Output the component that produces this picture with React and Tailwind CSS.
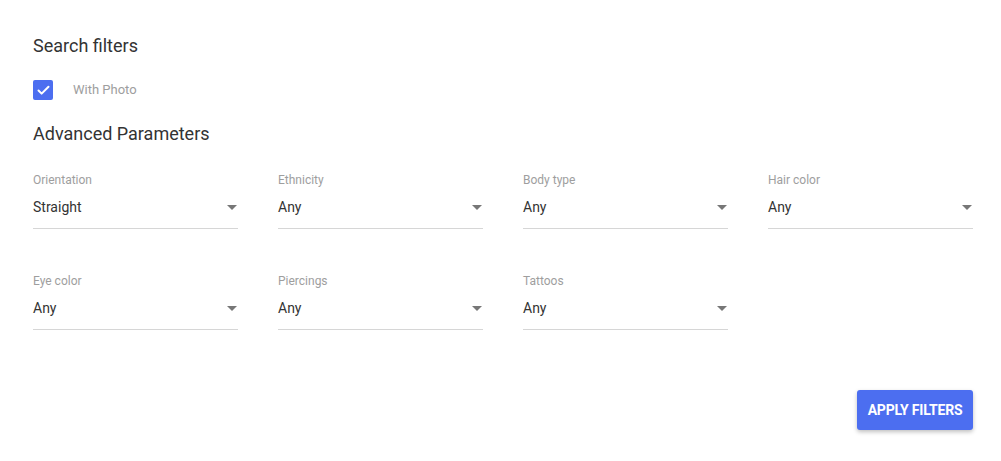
import { Check } from 'lucide-react';

const rows = [
  [
    { label: 'Orientation', value: 'Straight' },
    { label: 'Ethnicity', value: 'Any' },
    { label: 'Body type', value: 'Any' },
    { label: 'Hair color', value: 'Any' },
  ],
  [
    { label: 'Eye color', value: 'Any' },
    { label: 'Piercings', value: 'Any' },
    { label: 'Tattoos', value: 'Any' },
  ],
];

function SelectField({ label, value }) {
  return (
    <div className="flex flex-col">
      <span className="text-[12px] leading-[16px] text-[#9e9e9e]">{label}</span>
      <div className="mt-[9px] flex items-center justify-between border-b border-[#d6d6d6] pb-[11px]">
        <span className="text-[14px] leading-[20px] text-[#333]">{value}</span>
        <span className="mr-[1px] h-0 w-0 border-x-[5px] border-t-[5px] border-x-transparent border-t-[#777]" />
      </div>
    </div>
  );
}

export default function App() {
  return (
    <div className="min-h-[461px] bg-white pl-[33px] pt-[34px] font-['Roboto',sans-serif]">
      <div className="w-[940px]">
        <h2 className="text-[18px] leading-[24px] text-[#333]">Search filters</h2>

        <label className="mt-[22px] flex items-center">
          <span className="flex h-[20px] w-[20px] items-center justify-center rounded-[2px] bg-[#4c6ef0]">
            <Check size={15} strokeWidth={3.2} color="#fff" />
          </span>
          <span className="ml-[20px] text-[13px] text-[#9e9e9e]">With Photo</span>
        </label>

        <h2 className="mt-[22px] text-[18px] leading-[24px] text-[#333]">Advanced Parameters</h2>

        <div className="mt-[26px] flex flex-col gap-[44px]">
          {rows.map((row, i) => (
            <div key={i} className="grid grid-cols-4 gap-x-[40px]">
              {row.map((f) => (
                <SelectField key={f.label} {...f} />
              ))}
            </div>
          ))}
        </div>

        <div className="mt-[60px] flex justify-end">
          <button className="h-[40px] w-[116px] rounded-[3px] bg-[#4c6ef0] text-[14px] font-bold tracking-[-0.2px] text-white shadow-[0_2px_4px_rgba(0,0,0,0.25)]">
            APPLY FILTERS
          </button>
        </div>
      </div>
    </div>
  );
}
